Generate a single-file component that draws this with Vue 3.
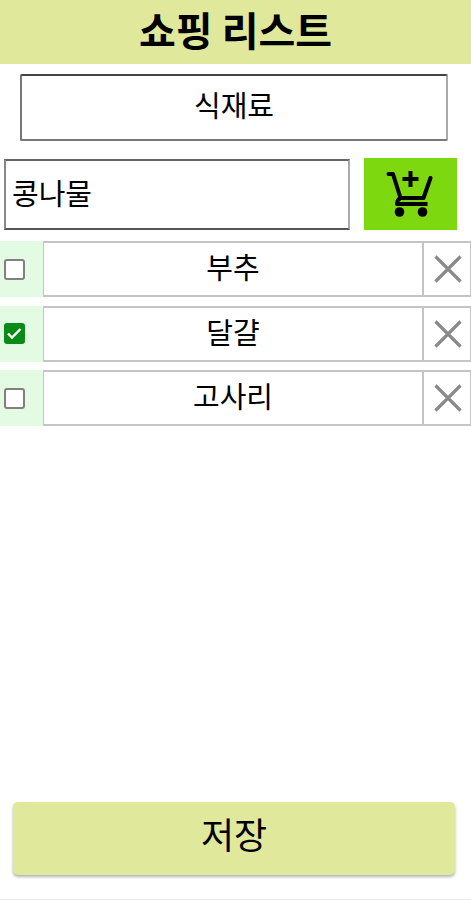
<template>
  <div class="page">
    <header class="title">쇼핑 리스트</header>

    <div class="category">식재료</div>

    <div class="add-row">
      <div class="name-input">콩나물</div>
      <button class="add-btn" aria-label="추가">
        <svg width="50" height="50" viewBox="0 0 50 50" fill="none" stroke="#000" stroke-width="4">
          <path d="M2.500 5H7l7.500 24" stroke-linecap="round" stroke-linejoin="round" />
          <path d="M14.500 29h23l7-20" stroke-linecap="round" stroke-linejoin="round" />
          <path d="M14.500 29c-2 1-3.500 3-3.500 6h30.500" stroke-linejoin="round" />
          <path d="M24.500 2v16M16.500 10h16" />
          <circle cx="13.500" cy="43" r="4.800" fill="#000" stroke="none" />
          <circle cx="36.500" cy="43" r="4.800" fill="#000" stroke="none" />
        </svg>
      </button>
    </div>

    <ul class="list">
      <li v-for="item in items" :key="item.name" class="item">
        <div class="check-cell">
          <span class="check" :class="{ on: item.done }">
            <svg v-if="item.done" width="21" height="21" viewBox="0 0 21 21" fill="none" stroke="#fff" stroke-width="2.400">
              <path d="M4 10.500 8 14.500 16.500 6" />
            </svg>
          </span>
        </div>
        <div class="label">{{ item.name }}</div>
        <button class="remove" aria-label="삭제">
          <svg width="30" height="30" viewBox="0 0 30 30" stroke="#8a8a8a" stroke-width="3.200">
            <path d="M2.500 2.500l25 25M27.500 2.500l-25 25" />
          </svg>
        </button>
      </li>
    </ul>

    <div class="footer">
      <button class="save">저장</button>
    </div>
  </div>
</template>

<script setup>
const items = [
  { name: '부추', done: false },
  { name: '달걀', done: true },
  { name: '고사리', done: false },
]
</script>

<style>
html, body {
  margin: 0;
  background: #fff;
}
</style>

<style scoped>
.page {
  height: 900px;
  box-sizing: border-box;
  display: flex;
  flex-direction: column;
  font-family: "Noto Sans CJK KR", sans-serif;
  color: #000;
  overflow: hidden;
  border-bottom: 1px solid #eee;
}

.title {
  height: 64px;
  line-height: 58px;
  background: #e0e89c;
  text-align: center;
  font-size: 40px;
  font-weight: 700;
}

.category {
  box-sizing: border-box;
  height: 67px;
  margin: 10px 23px 0 20px;
  border: 2px solid #444;
  border-left-color: #777;
  border-right-color: #aaa;
  border-bottom-color: #777;
  border-radius: 2px;
  text-align: center;
  font-size: 29px;
  line-height: 57px;
}

.add-row {
  display: flex;
  align-items: center;
  margin: 17px 14px 0 4px;
  gap: 14px;
}

.name-input {
  box-sizing: border-box;
  width: 346px;
  height: 71px;
  padding-left: 6px;
  border: 2px solid #666;
  border-left-color: #888;
  border-right-color: #aaa;
  border-bottom-color: #555;
  font-size: 29px;
  line-height: 62px;
}

.add-btn {
  width: 93px;
  height: 72px;
  padding: 0;
  border: 0;
  background: #7ed80f;
  display: flex;
  align-items: center;
  justify-content: center;
}

.list {
  list-style: none;
  margin: 11px 0 0;
  padding: 0;
  display: flex;
  flex-direction: column;
  gap: 8.500px;
}

.item {
  display: flex;
  height: 56px;
}

.check-cell {
  width: 43px;
  background: #e3fbe3;
  display: flex;
  align-items: center;
  justify-content: center;
  padding-right: 14px;
  box-sizing: border-box;
}

.check {
  box-sizing: border-box;
  width: 21px;
  height: 21px;
  border: 2px solid #808080;
  border-radius: 3px;
  background: #fff;
  display: block;
}

.check.on {
  background: #0a8a16;
  border: 0;
  display: flex;
  align-items: center;
  justify-content: center;
}

.label {
  box-sizing: border-box;
  flex: 1;
  border: 2px solid #c4c4c4;
  border-left-width: 1px;
  border-right-width: 1px;
  background: #fff;
  text-align: center;
  font-size: 29px;
  line-height: 47px;
}

.remove {
  box-sizing: border-box;
  width: 48px;
  padding: 0 0 0 2px;
  background: #fff;
  border: 2px solid #c4c4c4;
  border-left-width: 1px;
  border-right-width: 1px;
  display: flex;
  align-items: center;
  justify-content: center;
}

.footer {
  margin-top: auto;
  padding: 0 16px 24px 13px;
}

.save {
  display: block;
  width: 100%;
  height: 73px;
  padding: 0 0 12px;
  border: 0;
  border-radius: 5px;
  background: #e0e89c;
  box-shadow: 0 2px 3px rgba(0, 0, 0, 0.3);
  font-family: inherit;
  font-size: 36px;
  color: #000;
  line-height: 1;
}
</style>
